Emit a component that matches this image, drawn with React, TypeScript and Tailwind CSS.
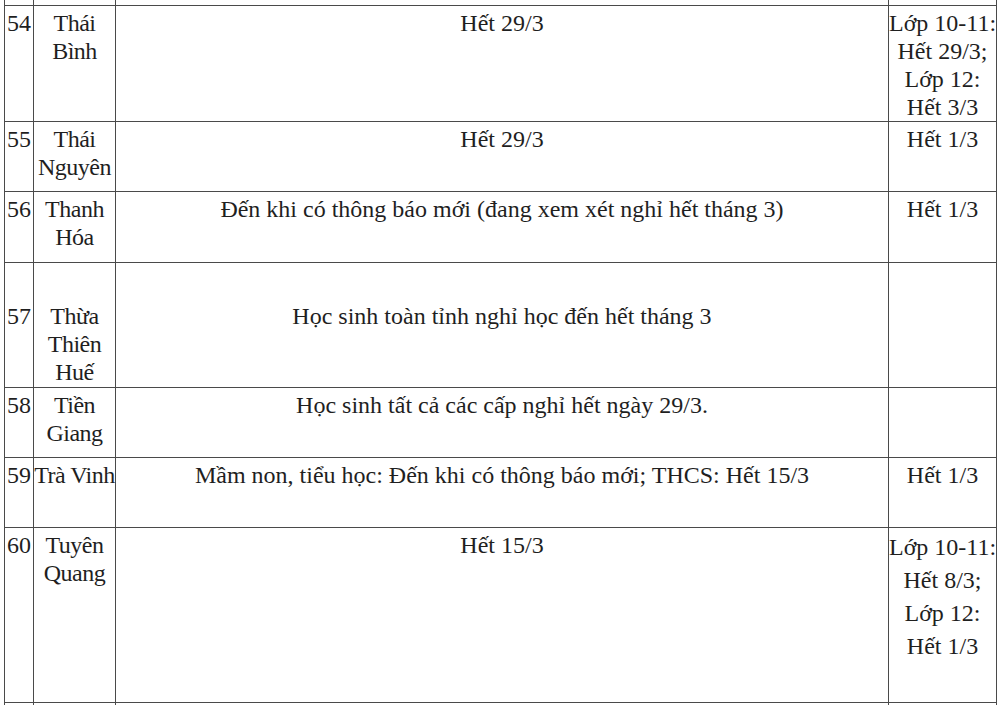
const rows = [
  {
    no: '54',
    name: ['Thái', 'Bình'],
    main: 'Hết 29/3',
    note: ['Lớp 10-11:', 'Hết 29/3;', 'Lớp 12:', 'Hết 3/3'],
    h: 'h-[116px]',
  },
  { no: '55', name: ['Thái', 'Nguyên'], main: 'Hết 29/3', note: ['Hết 1/3'], h: 'h-[70px]' },
  {
    no: '56',
    name: ['Thanh', 'Hóa'],
    main: 'Đến khi có thông báo mới (đang xem xét nghỉ hết tháng 3)',
    note: ['Hết 1/3'],
    h: 'h-[71px]',
  },
  {
    no: '57',
    name: ['Thừa', 'Thiên', 'Huế'],
    main: 'Học sinh toàn tỉnh nghỉ học đến hết tháng 3',
    note: [],
    h: 'h-[125px]',
    pad: 'pt-[39px]',
  },
  {
    no: '58',
    name: ['Tiền', 'Giang'],
    main: 'Học sinh tất cả các cấp nghỉ hết ngày 29/3.',
    note: [],
    h: 'h-[70px]',
  },
  {
    no: '59',
    name: ['Trà Vinh'],
    main: 'Mầm non, tiểu học: Đến khi có thông báo mới; THCS: Hết 15/3',
    note: ['Hết 1/3'],
    h: 'h-[70px]',
  },
  {
    no: '60',
    name: ['Tuyên', 'Quang'],
    main: 'Hết 15/3',
    note: ['Lớp 10-11:', 'Hết 8/3;', 'Lớp 12:', 'Hết 1/3'],
    h: 'h-[175px]',
    noteLeading: 'leading-[33px]',
  },
];

const cell =
  "border border-[#4a4a4a] px-0 align-top text-center font-['Liberation_Serif'] text-[24px] leading-[28px] text-[#1f1f1f]";

export default function App() {
  return (
    <div className="min-h-screen overflow-hidden bg-white">
      <table className="ml-[4px] w-[992px] table-fixed border-collapse">
        <colgroup>
          <col className="w-[29px]" />
          <col className="w-[82px]" />
          <col className="w-[773px]" />
          <col className="w-[108px]" />
        </colgroup>
        <tbody>
          <tr className="h-[5px]">
            <td className="border border-t-0 border-[#4a4a4a] p-0" />
            <td className="border border-t-0 border-[#4a4a4a] p-0" />
            <td className="border border-t-0 border-[#4a4a4a] p-0" />
            <td className="border border-t-0 border-[#4a4a4a] p-0" />
          </tr>
          {rows.map((r) => (
            <tr key={r.no} className={r.h}>
              <td className={`${cell} ${r.pad ?? 'pt-[3px]'}`}>{r.no}</td>
              <td className={`${cell} ${r.pad ?? 'pt-[3px]'} tracking-[-0.5px]`}>
                {r.name.map((n) => (
                  <div key={n} className="whitespace-nowrap">
                    {n}
                  </div>
                ))}
              </td>
              <td className={`${cell} ${r.pad ?? 'pt-[3px]'}`}>{r.main}</td>
              <td className={`${cell} ${r.pad ?? 'pt-[3px]'} ${r.noteLeading ?? ''}`}>
                {r.note.map((n, i) => (
                  <div key={i} className="whitespace-nowrap">
                    {n}
                  </div>
                ))}
              </td>
            </tr>
          ))}
          <tr className="h-[40px]">
            <td className={cell} />
            <td className={cell} />
            <td className={cell} />
            <td className={cell} />
          </tr>
        </tbody>
      </table>
    </div>
  );
}
